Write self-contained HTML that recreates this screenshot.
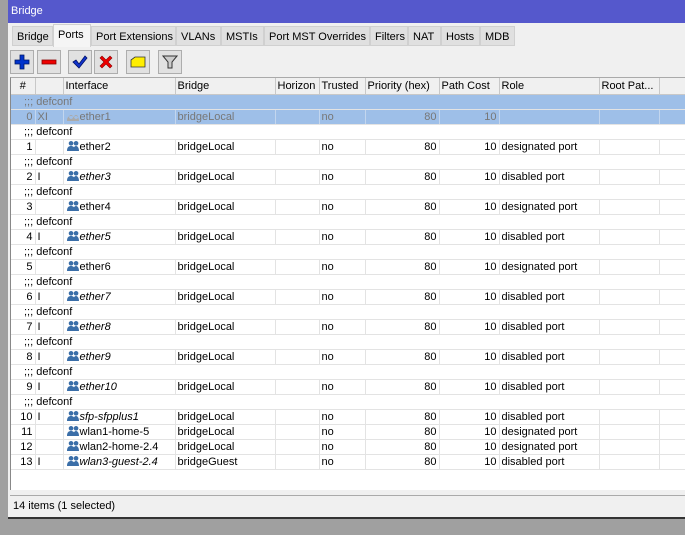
<!DOCTYPE html><html><head><style>
*{margin:0;padding:0;box-sizing:border-box}
body{width:685px;height:535px;background:#a0a0a0;font-family:"Liberation Sans",sans-serif;font-size:11px;color:#000;position:relative;overflow:hidden}
.win{position:absolute;left:8px;top:0;width:677px;height:519px;background:#f0f0f0;border-bottom:2px solid #333}
.title{position:absolute;left:0;top:0;width:677px;height:23px;background:#5558cc;color:#fff;padding:5px 0 0 3px;font-size:11px}
.tabs{position:absolute;top:26px;left:4px;height:20px}
.tab{position:absolute;top:0;height:20px;background:#e0e0e0;border:1px solid #d0d0d0;padding:4px 0 0 4px;white-space:nowrap}
.tab.act{background:#f5f5f5;top:-2px;height:23px;border-bottom:none}
.btn{position:absolute;top:50px;width:24px;height:24px;border:1px solid #adadad;background:#e1e1e1}
.btn svg{position:absolute;left:3px;top:3px}
.grid{position:absolute;left:2px;top:77px;width:675px;height:413px;background:#fff;border-left:1px solid #888;border-top:1px solid #aaa}
table{border-collapse:collapse;table-layout:fixed;width:675px}
td{height:15px;padding:0 2px;border-right:1px solid #e3e3e3;border-bottom:1px solid #e3e3e3;white-space:nowrap;overflow:hidden;line-height:14px}
th{height:16px;font-weight:normal;text-align:left;padding:0 2px;border-right:1px solid #c8c8c8;border-bottom:1px solid #c8c8c8;background:#f0f0f0;white-space:nowrap;overflow:hidden}
.r{text-align:right}
tr.c td{border-right:none;padding-left:13px}
tr.s td{background:#9ebfe8;color:#777;border-right-color:#c3d6ee}
i{font-style:italic}
.ic{display:inline-block;width:13px;height:10px;vertical-align:-1px;margin-right:1px}
.status{position:absolute;left:2px;top:495px;width:675px;height:21px;border-top:1px solid #aaa;padding:4px 0 0 3px}
</style></head><body>
<div class="win">
<div class="title">Bridge</div>
<div class="tabs">
<div class="tab" style="left:0;width:41px">Bridge</div>
<div class="tab act" style="left:41px;width:38px">Ports</div>
<div class="tab" style="left:79px;width:85px">Port Extensions</div>
<div class="tab" style="left:164px;width:45px">VLANs</div>
<div class="tab" style="left:209px;width:43px">MSTIs</div>
<div class="tab" style="left:252px;width:106px">Port MST Overrides</div>
<div class="tab" style="left:358px;width:38px">Filters</div>
<div class="tab" style="left:396px;width:33px">NAT</div>
<div class="tab" style="left:429px;width:39px">Hosts</div>
<div class="tab" style="left:468px;width:35px">MDB</div>
</div>
<div class="btn" style="left:2px"><svg width="16" height="16"><path d="M6 1h4v5h5v4h-5v5H6v-5H1V6h5z" fill="#0033cc" stroke="#001a66" stroke-width=".8"/></svg></div>
<div class="btn" style="left:29px"><svg width="16" height="16"><rect x="1" y="6" width="14" height="4" fill="#e00" stroke="#800" stroke-width=".8"/></svg></div>
<div class="btn" style="left:60px"><svg width="16" height="16"><path d="M1 8l3-2 3 4 6-8 2 2-8 10z" fill="#1133cc" stroke="#001166" stroke-width=".8"/></svg></div>
<div class="btn" style="left:86px"><svg width="16" height="16"><path d="M2 4l2-2 4 4 4-4 2 2-4 4 4 4-2 2-4-4-4 4-2-2 4-4z" fill="#e00" stroke="#800" stroke-width=".6"/></svg></div>
<div class="btn" style="left:118px"><svg width="16" height="16"><path d="M1 6l4-3h10v10H1z" fill="#ffee00" stroke="#333" stroke-width=".8"/></svg></div>
<div class="btn" style="left:150px"><svg width="16" height="16"><path d="M1 2h14l-5 6v6h-4V8z" fill="#ccc" stroke="#333" stroke-width="1"/></svg></div>
<div class="grid"><table>
<colgroup><col style="width:24px"><col style="width:28px"><col style="width:112px"><col style="width:100px"><col style="width:44px"><col style="width:46px"><col style="width:74px"><col style="width:60px"><col style="width:100px"><col style="width:60px"><col></colgroup>
<tr><th style="text-align:center">#</th><th></th><th>Interface</th><th>Bridge</th><th>Horizon</th><th>Trusted</th><th>Priority (hex)</th><th>Path Cost</th><th>Role</th><th>Root Pat...</th><th></th></tr>
<tr class="c s"><td colspan="11">;;; defconf</td></tr>
<tr class="s"><td class="r">0</td><td>XI</td><td><svg class="ic"><path d="M1 10c0-4 2-5 4-5s4 1 4 5zM7 10c0-4 2-5 3-5s3 1 3 5zM5 4a2 2 0 1 0 .1 0zM10 4a2 2 0 1 0 .1 0z" fill="#aaa"/></svg>ether1</td><td>bridgeLocal</td><td></td><td>no</td><td class="r">80</td><td class="r">10</td><td></td><td></td><td></td></tr>
<tr class="c"><td colspan="11">;;; defconf</td></tr>
<tr><td class="r">1</td><td></td><td><svg class="ic"><path d="M1 10c0-4 2-5 4-5s4 1 4 5zM7 10c0-4 2-5 3-5s3 1 3 5zM5 0a2.3 2.3 0 1 0 .1 0zM10 0a2.3 2.3 0 1 0 .1 0z" fill="#3a6ea8"/></svg>ether2</td><td>bridgeLocal</td><td></td><td>no</td><td class="r">80</td><td class="r">10</td><td>designated port</td><td></td><td></td></tr>
<tr class="c"><td colspan="11">;;; defconf</td></tr>
<tr><td class="r">2</td><td>I</td><td><svg class="ic"><path d="M1 10c0-4 2-5 4-5s4 1 4 5zM7 10c0-4 2-5 3-5s3 1 3 5zM5 0a2.3 2.3 0 1 0 .1 0zM10 0a2.3 2.3 0 1 0 .1 0z" fill="#3a6ea8"/></svg><i>ether3</i></td><td>bridgeLocal</td><td></td><td>no</td><td class="r">80</td><td class="r">10</td><td>disabled port</td><td></td><td></td></tr>
<tr class="c"><td colspan="11">;;; defconf</td></tr>
<tr><td class="r">3</td><td></td><td><svg class="ic"><path d="M1 10c0-4 2-5 4-5s4 1 4 5zM7 10c0-4 2-5 3-5s3 1 3 5zM5 0a2.3 2.3 0 1 0 .1 0zM10 0a2.3 2.3 0 1 0 .1 0z" fill="#3a6ea8"/></svg>ether4</td><td>bridgeLocal</td><td></td><td>no</td><td class="r">80</td><td class="r">10</td><td>designated port</td><td></td><td></td></tr>
<tr class="c"><td colspan="11">;;; defconf</td></tr>
<tr><td class="r">4</td><td>I</td><td><svg class="ic"><path d="M1 10c0-4 2-5 4-5s4 1 4 5zM7 10c0-4 2-5 3-5s3 1 3 5zM5 0a2.3 2.3 0 1 0 .1 0zM10 0a2.3 2.3 0 1 0 .1 0z" fill="#3a6ea8"/></svg><i>ether5</i></td><td>bridgeLocal</td><td></td><td>no</td><td class="r">80</td><td class="r">10</td><td>disabled port</td><td></td><td></td></tr>
<tr class="c"><td colspan="11">;;; defconf</td></tr>
<tr><td class="r">5</td><td></td><td><svg class="ic"><path d="M1 10c0-4 2-5 4-5s4 1 4 5zM7 10c0-4 2-5 3-5s3 1 3 5zM5 0a2.3 2.3 0 1 0 .1 0zM10 0a2.3 2.3 0 1 0 .1 0z" fill="#3a6ea8"/></svg>ether6</td><td>bridgeLocal</td><td></td><td>no</td><td class="r">80</td><td class="r">10</td><td>designated port</td><td></td><td></td></tr>
<tr class="c"><td colspan="11">;;; defconf</td></tr>
<tr><td class="r">6</td><td>I</td><td><svg class="ic"><path d="M1 10c0-4 2-5 4-5s4 1 4 5zM7 10c0-4 2-5 3-5s3 1 3 5zM5 0a2.3 2.3 0 1 0 .1 0zM10 0a2.3 2.3 0 1 0 .1 0z" fill="#3a6ea8"/></svg><i>ether7</i></td><td>bridgeLocal</td><td></td><td>no</td><td class="r">80</td><td class="r">10</td><td>disabled port</td><td></td><td></td></tr>
<tr class="c"><td colspan="11">;;; defconf</td></tr>
<tr><td class="r">7</td><td>I</td><td><svg class="ic"><path d="M1 10c0-4 2-5 4-5s4 1 4 5zM7 10c0-4 2-5 3-5s3 1 3 5zM5 0a2.3 2.3 0 1 0 .1 0zM10 0a2.3 2.3 0 1 0 .1 0z" fill="#3a6ea8"/></svg><i>ether8</i></td><td>bridgeLocal</td><td></td><td>no</td><td class="r">80</td><td class="r">10</td><td>disabled port</td><td></td><td></td></tr>
<tr class="c"><td colspan="11">;;; defconf</td></tr>
<tr><td class="r">8</td><td>I</td><td><svg class="ic"><path d="M1 10c0-4 2-5 4-5s4 1 4 5zM7 10c0-4 2-5 3-5s3 1 3 5zM5 0a2.3 2.3 0 1 0 .1 0zM10 0a2.3 2.3 0 1 0 .1 0z" fill="#3a6ea8"/></svg><i>ether9</i></td><td>bridgeLocal</td><td></td><td>no</td><td class="r">80</td><td class="r">10</td><td>disabled port</td><td></td><td></td></tr>
<tr class="c"><td colspan="11">;;; defconf</td></tr>
<tr><td class="r">9</td><td>I</td><td><svg class="ic"><path d="M1 10c0-4 2-5 4-5s4 1 4 5zM7 10c0-4 2-5 3-5s3 1 3 5zM5 0a2.3 2.3 0 1 0 .1 0zM10 0a2.3 2.3 0 1 0 .1 0z" fill="#3a6ea8"/></svg><i>ether10</i></td><td>bridgeLocal</td><td></td><td>no</td><td class="r">80</td><td class="r">10</td><td>disabled port</td><td></td><td></td></tr>
<tr class="c"><td colspan="11">;;; defconf</td></tr>
<tr><td class="r">10</td><td>I</td><td><svg class="ic"><path d="M1 10c0-4 2-5 4-5s4 1 4 5zM7 10c0-4 2-5 3-5s3 1 3 5zM5 0a2.3 2.3 0 1 0 .1 0zM10 0a2.3 2.3 0 1 0 .1 0z" fill="#3a6ea8"/></svg><i>sfp-sfpplus1</i></td><td>bridgeLocal</td><td></td><td>no</td><td class="r">80</td><td class="r">10</td><td>disabled port</td><td></td><td></td></tr>
<tr><td class="r">11</td><td></td><td><svg class="ic"><path d="M1 10c0-4 2-5 4-5s4 1 4 5zM7 10c0-4 2-5 3-5s3 1 3 5zM5 0a2.3 2.3 0 1 0 .1 0zM10 0a2.3 2.3 0 1 0 .1 0z" fill="#3a6ea8"/></svg>wlan1-home-5</td><td>bridgeLocal</td><td></td><td>no</td><td class="r">80</td><td class="r">10</td><td>designated port</td><td></td><td></td></tr>
<tr><td class="r">12</td><td></td><td><svg class="ic"><path d="M1 10c0-4 2-5 4-5s4 1 4 5zM7 10c0-4 2-5 3-5s3 1 3 5zM5 0a2.3 2.3 0 1 0 .1 0zM10 0a2.3 2.3 0 1 0 .1 0z" fill="#3a6ea8"/></svg>wlan2-home-2.4</td><td>bridgeLocal</td><td></td><td>no</td><td class="r">80</td><td class="r">10</td><td>designated port</td><td></td><td></td></tr>
<tr><td class="r">13</td><td>I</td><td><svg class="ic"><path d="M1 10c0-4 2-5 4-5s4 1 4 5zM7 10c0-4 2-5 3-5s3 1 3 5zM5 0a2.3 2.3 0 1 0 .1 0zM10 0a2.3 2.3 0 1 0 .1 0z" fill="#3a6ea8"/></svg><i>wlan3-guest-2.4</i></td><td>bridgeGuest</td><td></td><td>no</td><td class="r">80</td><td class="r">10</td><td>disabled port</td><td></td><td></td></tr>
</table></div>
<div class="status">14 items (1 selected)</div>
</div>
</body></html>
